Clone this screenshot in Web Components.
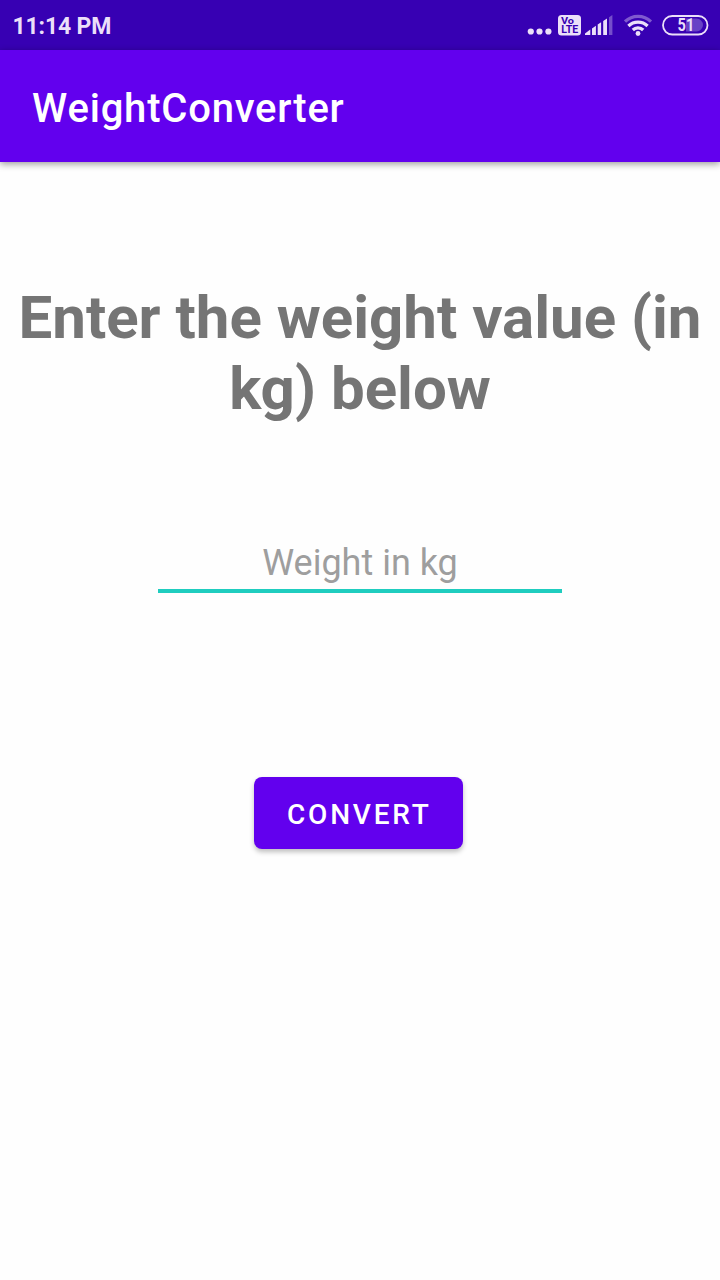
<!DOCTYPE html>
<html lang="en">
<head>
<meta charset="utf-8">
<title>WeightConverter</title>
<style>
html, body { margin: 0; height: 100%; background: #fefefe; }
body { font-family: Roboto, sans-serif; }
</style>
</head>
<body>
<weight-app></weight-app>
<script>
const define = (name, html) => customElements.define(name, class extends HTMLElement {
  constructor() {
    super();
    this.attachShadow({ mode: 'open' }).innerHTML = html;
  }
});

define('status-bar', `
<style>
:host { display: flex; box-sizing: border-box; height: 50px; padding: 0 11px 0 12.5px; background: #3700b3; color: #ebdff9; justify-content: space-between; }
.time { font-size: 23px; font-weight: 700; line-height: 27px; letter-spacing: -.15px; padding-top: 13px; white-space: nowrap; }
.icons { display: flex; padding-top: 10px; }
svg { display: block; height: 30px; }
text { font-family: Roboto, sans-serif; font-weight: 700; }
</style>
<div class="time"><slot></slot></div>
<div class="icons">
<svg width="31" viewBox="0 0 31 30" fill="#ebdff9"><circle cx="3.8" cy="21.5" r="3.1"/><circle cx="12.5" cy="21.5" r="3.1"/><circle cx="21.4" cy="21.5" r="3.1"/></svg>
<svg width="27" viewBox="0 0 27 30"><rect x="0" y="5" width="23" height="20.5" rx="3.5" fill="#ebdff9"/><g fill="#3700b3"><text x="3" y="14" font-size="9.5" textLength="13" lengthAdjust="spacingAndGlyphs">Vo</text><text x="3.3" y="23.2" font-size="10" textLength="17" lengthAdjust="spacingAndGlyphs">LTE</text></g></svg>
<svg width="39" viewBox="0 0 39 30" fill="#ebdff9"><path d="M0 25v-1.6l5.3-3.9V25zM7 18.4l3.9-2.6V25H7zM12.7 14.6l3.4-2.3V25h-3.4zM18.2 11l3.8-2.6V25h-3.8z"/><path d="M24 7.2l3.4-2.2v20H24z" opacity=".35"/></svg>
<svg width="38" viewBox="0 0 38 30" fill="none" stroke="#ebdff9" stroke-width="3.2"><path d="M1 11.6a18.8 18.8 0 0 1 26 0" opacity=".4"/><path d="M4.4 16a13.7 13.7 0 0 1 19.2 0M8.8 20a7.4 7.4 0 0 1 10.4 0"/><circle cx="14" cy="23.5" r="2.4" fill="#ebdff9" stroke="none"/></svg>
<svg width="47" viewBox="0 0 47 30"><path d="M24 8.5h10.5a6.5 6.5 0 0 1 0 13H24z" fill="#6841c6"/><rect x="1" y="6" width="44.5" height="18.5" rx="9.25" fill="none" stroke="#ebdff9" stroke-width="1.8"/><text x="15.5" y="21.2" font-size="17.5" textLength="16.8" lengthAdjust="spacingAndGlyphs" fill="#ebdff9">51</text></svg>
</div>`);

define('app-bar', `
<style>
:host { display: flex; box-sizing: border-box; height: 112px; padding: 35px 32px 0; background: #6200ee; color: #fff; font-size: 40px; font-weight: 500; line-height: 48px; letter-spacing: .8px; box-shadow: 0 2px 7px rgba(0,0,0,.4); }
</style><slot></slot>`);

define('page-heading', `
<style>
:host { display: block; font-size: 60px; font-weight: 700; line-height: 71px; text-align: center; color: #757575; }
</style><slot></slot>`);

define('weight-field', `
<style>
:host { display: block; width: 404px; border-bottom: 4px solid #1fcdbf; text-align: center; font-size: 36px; line-height: 42px; padding-bottom: 5px; color: #9e9e9e; }
</style><slot></slot>`);

define('action-button', `
<style>
:host { display: flex; box-sizing: border-box; width: 209px; height: 72px; padding: 0 0 0 33px; align-items: center; border-radius: 8px; background: #6200ee; color: #fff; font-size: 28px; font-weight: 500; line-height: 33px; letter-spacing: 2.8px; box-shadow: 0 3px 5px rgba(0,0,0,.25); }
.label { padding-top: 3px; }
</style><span class="label"><slot></slot></span>`);

define('weight-app', `
<style>
:host { display: flex; flex-direction: column; width: 720px; height: 1280px; overflow: hidden; }
main { display: flex; flex-direction: column; align-items: center; padding-top: 120px; }
page-heading { width: 720px; }
weight-field { margin-top: 118px; }
action-button { margin: 184px 3px 0 0; }
</style>
<status-bar>11:14 PM</status-bar>
<app-bar>WeightConverter</app-bar>
<main>
<page-heading>Enter the weight value (in kg) below</page-heading>
<weight-field>Weight in kg</weight-field>
<action-button>CONVERT</action-button>
</main>`);
</script>
</body>
</html>
